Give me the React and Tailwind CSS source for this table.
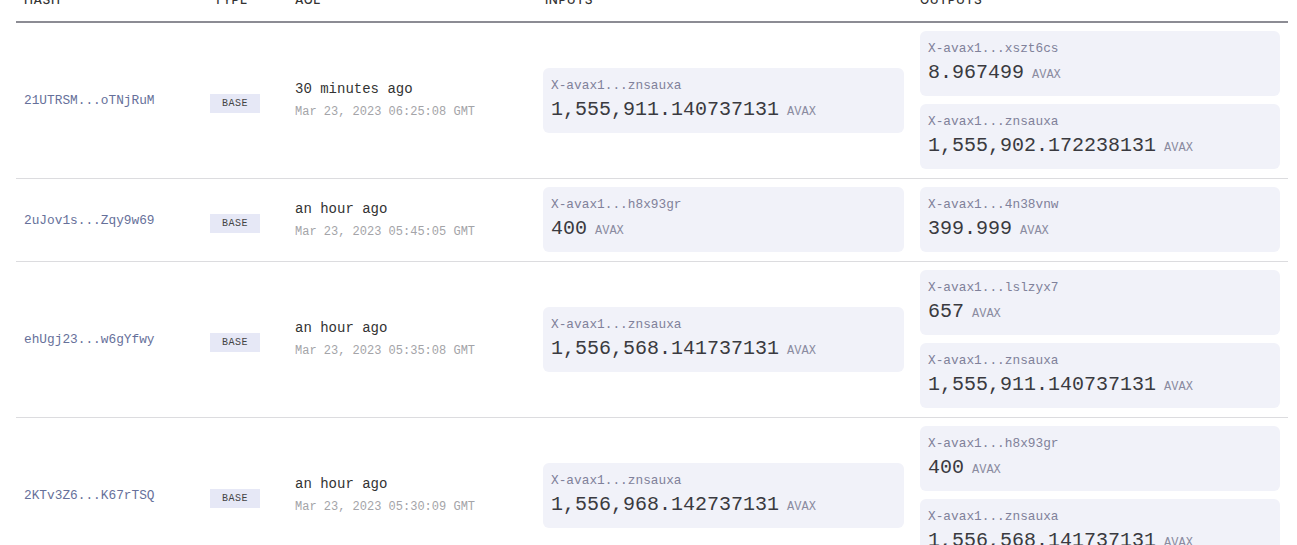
const ROWS = [
  {
    hash: '21UTRSM...oTNjRuM',
    age: '30 minutes ago',
    date: 'Mar 23, 2023 06:25:08 GMT',
    inputs: [{ addr: 'X-avax1...znsauxa', amount: '1,555,911.140737131' }],
    outputs: [
      { addr: 'X-avax1...xszt6cs', amount: '8.967499' },
      { addr: 'X-avax1...znsauxa', amount: '1,555,902.172238131' },
    ],
  },
  {
    hash: '2uJov1s...Zqy9w69',
    age: 'an hour ago',
    date: 'Mar 23, 2023 05:45:05 GMT',
    inputs: [{ addr: 'X-avax1...h8x93gr', amount: '400' }],
    outputs: [{ addr: 'X-avax1...4n38vnw', amount: '399.999' }],
  },
  {
    hash: 'ehUgj23...w6gYfwy',
    age: 'an hour ago',
    date: 'Mar 23, 2023 05:35:08 GMT',
    inputs: [{ addr: 'X-avax1...znsauxa', amount: '1,556,568.141737131' }],
    outputs: [
      { addr: 'X-avax1...lslzyx7', amount: '657' },
      { addr: 'X-avax1...znsauxa', amount: '1,555,911.140737131' },
    ],
  },
  {
    hash: '2KTv3Z6...K67rTSQ',
    age: 'an hour ago',
    date: 'Mar 23, 2023 05:30:09 GMT',
    inputs: [{ addr: 'X-avax1...znsauxa', amount: '1,556,968.142737131' }],
    outputs: [
      { addr: 'X-avax1...h8x93gr', amount: '400' },
      { addr: 'X-avax1...znsauxa', amount: '1,556,568.141737131' },
    ],
  },
]

const mono = "font-['Liberation_Mono','DejaVu_Sans_Mono',monospace]"

function Utxo({ addr, amount }) {
  return (
    <div className="h-[65px] rounded-md bg-[#f1f2f9] px-2 pt-2">
      <div className={`${mono} text-[12.8px] leading-5 text-[#80819a]`}>{addr}</div>
      <div className={`${mono} leading-7 whitespace-nowrap`}>
        <span className="text-[20px] text-[#3a3a40]">{amount}</span>
        <span className="ml-2 text-[12px] text-[#8a8ba0]">AVAX</span>
      </div>
    </div>
  )
}

export default function App() {
  return (
    <div className="h-[545px] overflow-hidden bg-white px-4 font-['Inter',sans-serif]">
      <div className="-mt-[8px] w-[1272px]">
        {/* header */}
        <div className="grid grid-cols-[186px_85px_248px_377px_376px] border-b-2 border-[#8c8c94] pb-[13px] text-[12px] font-medium leading-4 tracking-wider text-[#333]">
          <div className="px-2">HASH</div>
          <div className="pl-3">TYPE</div>
          <div className="px-2">AGE</div>
          <div className="px-2.5">INPUTS</div>
          <div className="px-2">OUTPUTS</div>
        </div>

        {ROWS.map((row) => (
          <div
            key={row.hash}
            className="grid grid-cols-[186px_85px_248px_377px_376px] items-center border-b border-[#dcdcdf]"
          >
            <div className={`${mono} px-2 pt-px text-[12.8px] text-[#66709a]`}>{row.hash}</div>
            <div className="px-2">
              <span className={`${mono} inline-flex h-[19px] w-[50px] items-center justify-center bg-[#e6e8f6] text-[10px] tracking-wider text-[#444]`}>
                BASE
              </span>
            </div>
            <div className="px-2">
              <div className={`${mono} text-[14px] leading-5 text-[#333]`}>{row.age}</div>
              <div className={`${mono} mt-[3px] text-[12px] leading-5 text-[#a4a4a8]`}>{row.date}</div>
            </div>
            <div className="flex flex-col gap-2 px-2 pt-2 pb-[9px]">
              {row.inputs.map((u, i) => (
                <Utxo key={i} {...u} />
              ))}
            </div>
            <div className="flex flex-col gap-2 px-2 pt-2 pb-[9px]">
              {row.outputs.map((u, i) => (
                <Utxo key={i} {...u} />
              ))}
            </div>
          </div>
        ))}
      </div>
    </div>
  )
}
